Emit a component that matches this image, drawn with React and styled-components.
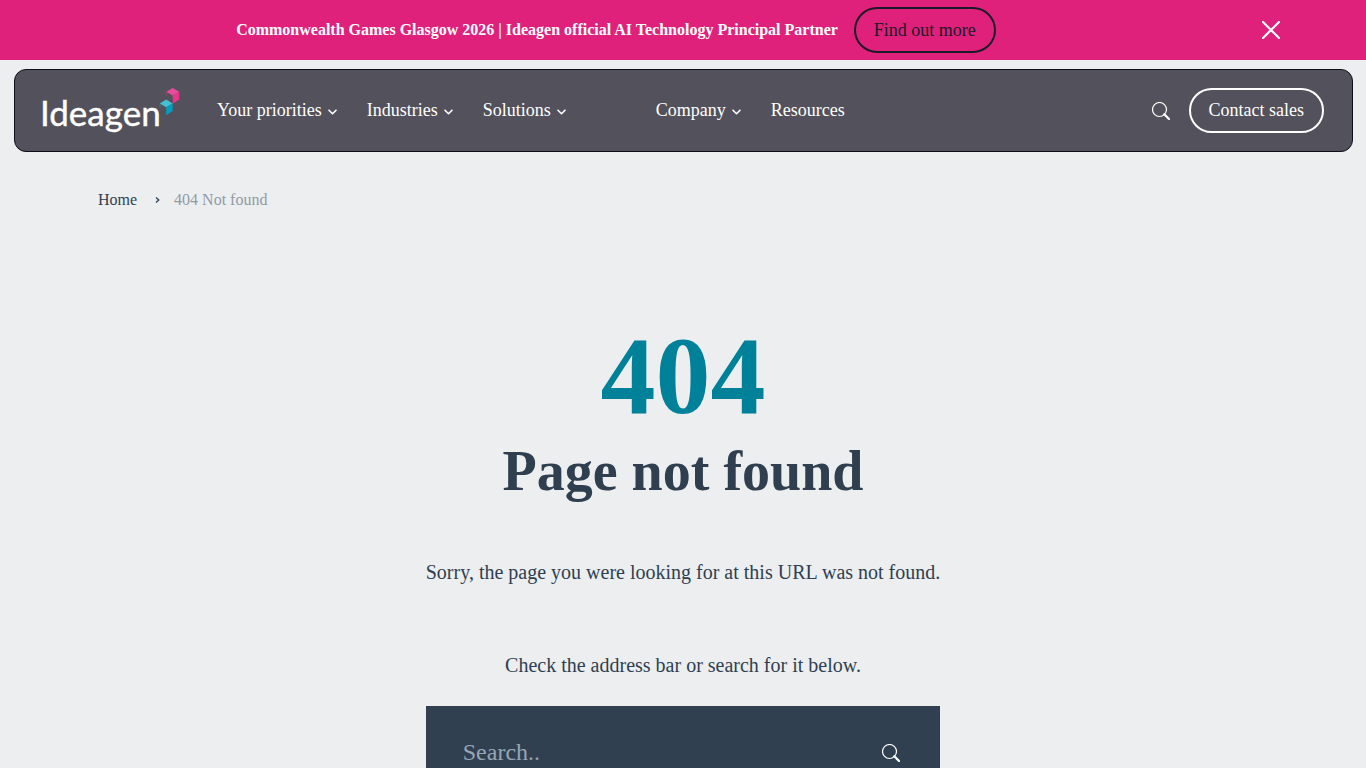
import React, { useState } from "react";
import styled, { createGlobalStyle } from "styled-components";

const GlobalStyle = createGlobalStyle`
  * {
    box-sizing: border-box;
  }
  body {
    margin: 0;
    background: #eceef0;
    color: #2f3f50;
    font-family: "Liberation Serif", "Times New Roman", serif;
    font-size: 16px;
  }
  a {
    color: inherit;
    text-decoration: none;
  }
  button {
    border: 0;
    padding: 0;
    background: none;
    color: inherit;
    font: inherit;
    cursor: pointer;
  }
  svg {
    display: block;
    flex-shrink: 0;
  }
`;

const Banner = styled.aside`
  display: flex;
  align-items: center;
  height: 60px;
  background: #df217c;
  color: #fff;
`;

const BannerMessage = styled.div`
  display: flex;
  flex: 1;
  align-items: center;
  justify-content: center;
  gap: 16px;
`;

const BannerText = styled.p`
  margin: 0;
  font-weight: 700;
`;

const CloseButton = styled.button`
  margin: 0 86px 0 30px;
`;

const PillLink = styled.a`
  padding: 0 18px;
  border: 2px solid ${({ $dark }) => ($dark ? "#1c1a27" : "#fff")};
  border-radius: 23px;
  color: ${({ $dark }) => ($dark ? "#1c1a27" : "#fff")};
  font-size: 18px;
  line-height: ${({ $dark }) => ($dark ? "42px" : "41px")};
  white-space: nowrap;
`;

const Header = styled.header`
  display: flex;
  align-items: center;
  height: 83px;
  margin: 9px 13px 0 14px;
  padding: 0 28px 0 23px;
  border: 1px solid #100e1a;
  border-radius: 12px;
  background: #53515b;
  color: #fff;
`;

const Nav = styled.nav`
  flex: 1;
  margin-left: 37px;
`;

const NavList = styled.ul`
  display: flex;
  gap: 30px;
  margin: 0;
  padding: 0 0 2px;
  list-style: none;
`;

const NavItem = styled.li`
  margin-left: ${({ $apart }) => ($apart ? "60px" : "0")};
`;

const NavButton = styled.button`
  display: flex;
  align-items: center;
  gap: 6px;
  font-size: 18px;
  line-height: 24px;

  svg {
    margin-top: 5px;
  }
`;

const Tools = styled.div`
  display: flex;
  align-items: center;
  gap: 19px;
`;

const Breadcrumbs = styled.ol`
  display: flex;
  align-items: center;
  margin: 36px 98px 0;
  padding: 0;
  line-height: 24px;
  list-style: none;
`;

const Crumb = styled.li`
  display: flex;
  align-items: center;
  color: ${({ $current }) => ($current ? "#929ba5" : "inherit")};

  svg {
    margin: 0 14px 0 18px;
  }
`;

const Content = styled.main`
  display: flex;
  flex-direction: column;
  width: fit-content;
  margin: 104px auto 0;
  text-align: center;
`;

const Code = styled.p`
  margin: 0;
  color: #00819a;
  font-size: 110px;
  font-weight: 700;
  line-height: 120px;
`;

const Title = styled.h1`
  margin: 0 0 51px;
  font-size: 56px;
  font-weight: 700;
  line-height: 70px;
`;

const Message = styled.p`
  margin: 0 0 ${({ $last }) => ($last ? "26px" : "63px")};
  font-size: 20px;
  line-height: 30px;
`;

const SearchForm = styled.form`
  display: flex;
  align-items: center;
  height: 94px;
  padding: 0 40px 0 37px;
  background: #304050;
  color: #fff;
`;

const SearchInput = styled.input`
  flex: 1;
  min-width: 0;
  padding: 0 0 2px;
  border: 0;
  outline: 0;
  background: none;
  color: #fff;
  font: inherit;
  font-size: 24px;
  line-height: 30px;

  &::placeholder {
    color: #97a5b4;
    opacity: 1;
  }
`;

const SearchIcon = () => (
  <svg width="18" height="18" viewBox="0 0 18 18" fill="none" stroke="currentColor" aria-hidden="true">
    <circle cx="7.5" cy="7.5" r="7" strokeWidth="1.2" />
    <path d="M12.3 12.3 17 17" strokeWidth="2.3" strokeLinecap="round" />
  </svg>
);

const ChevronDown = () => (
  <svg width="9" height="6" viewBox="0 0 9 6" fill="none" stroke="currentColor" strokeWidth="1.6" aria-hidden="true">
    <path d="M1 1.2l3.5 3.5L8 1.2" strokeLinecap="round" strokeLinejoin="round" />
  </svg>
);

const Logo = () => (
  <svg width="142" height="45" viewBox="-4 0 142 45" role="img" aria-label="Ideagen">
    <text x="-2" y="38" fill="#fff" stroke="#fff" strokeWidth=".4" fontFamily="Lato, sans-serif" fontSize="35">
      Ideagen
    </text>
    <path d="M130.7 0l6.5 3.7-6.5 3.7-6.4-3.7z" fill="#e94c98" />
    <path d="M137.2 3.7v7.7l-6.5 4.3V7.4z" fill="#e5388b" />
    <path d="M124.6 3.7v4.2" stroke="#b5417b" strokeWidth=".6" />
    <path d="M124.2 11.6l6.4 3.8-6.4 3.9-6.5-3.9z" fill="#45bfd2" />
    <path d="M130.6 15.4V23l-6.4 4.2v-7.9z" fill="#009fbd" />
    <path d="M118 15.4v4" stroke="#378b9e" strokeWidth=".6" />
  </svg>
);

const navItems = [
  { label: "Your priorities", menu: true },
  { label: "Industries", menu: true },
  { label: "Solutions", menu: true },
  { label: "Company", menu: true, apart: true },
  { label: "Resources" },
];

const App = () => {
  const [bannerOpen, setBannerOpen] = useState(true);

  return (
    <>
      <GlobalStyle />
      {bannerOpen && (
        <Banner>
          <BannerMessage>
            <BannerText>
              Commonwealth Games Glasgow 2026 | Ideagen official AI Technology Principal Partner
            </BannerText>
            <PillLink href="#partner" $dark>
              Find out more
            </PillLink>
          </BannerMessage>
          <CloseButton aria-label="Close" onClick={() => setBannerOpen(false)}>
            <svg width="18" height="18" viewBox="0 0 18 18" stroke="#fff" strokeWidth="2.2" strokeLinecap="round">
              <path d="M1 1l16 16M17 1L1 17" />
            </svg>
          </CloseButton>
        </Banner>
      )}
      <Header>
        <a href="#home">
          <Logo />
        </a>
        <Nav>
          <NavList>
            {navItems.map((item) => (
              <NavItem key={item.label} $apart={item.apart}>
                <NavButton as={item.menu ? "button" : "a"} href={item.menu ? undefined : "#resources"}>
                  {item.label}
                  {item.menu && <ChevronDown />}
                </NavButton>
              </NavItem>
            ))}
          </NavList>
        </Nav>
        <Tools>
          <button aria-label="Search site">
            <SearchIcon />
          </button>
          <PillLink href="#contact">Contact sales</PillLink>
        </Tools>
      </Header>
      <nav aria-label="Breadcrumb">
        <Breadcrumbs>
          <Crumb>
            <a href="#home">Home</a>
            <svg width="5" height="6" viewBox="0 0 5 6" fill="none" stroke="currentColor" strokeWidth="1.3">
              <path d="M1 .5L3.8 3 1 5.5" />
            </svg>
          </Crumb>
          <Crumb $current aria-current="page">
            404 Not found
          </Crumb>
        </Breadcrumbs>
      </nav>
      <Content>
        <Code>404</Code>
        <Title>Page not found</Title>
        <Message>Sorry, the page you were looking for at this URL was not found.</Message>
        <Message $last>Check the address bar or search for it below.</Message>
        <SearchForm role="search" onSubmit={(e) => e.preventDefault()}>
          <SearchInput type="search" aria-label="Search" placeholder="Search.." />
          <button type="submit" aria-label="Submit search">
            <SearchIcon />
          </button>
        </SearchForm>
      </Content>
    </>
  );
};

export default App;
